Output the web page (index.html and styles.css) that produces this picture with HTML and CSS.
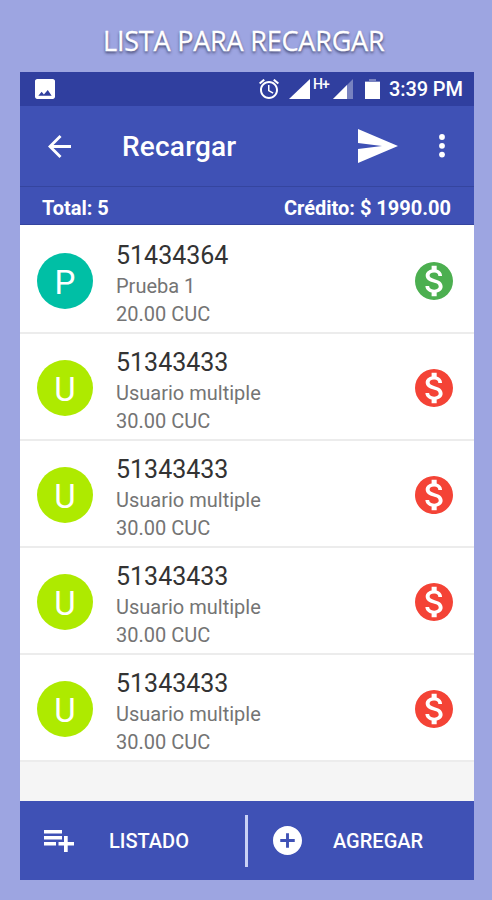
FILE: index.html
```html
<!DOCTYPE html>
<html lang="es">
<head>
  <meta charset="UTF-8">
  <meta name="viewport" content="width=device-width, initial-scale=1.0">
  <title>Lista para recargar</title>
  <link rel="stylesheet" href="styles.css">
</head>
<body>
  <svg width="0" height="0" class="defs">
    <symbol id="coin" viewBox="2 2 20 20">
      <path d="M12 2C6.48 2 2 6.48 2 12s4.48 10 10 10 10-4.48 10-10S17.52 2 12 2zm1.41 16.09V20h-2.67v-1.93c-1.71-.36-3.16-1.46-3.27-3.4h1.96c.1 1.05.82 1.87 2.65 1.87 1.96 0 2.4-.98 2.4-1.59 0-.83-.44-1.61-2.67-2.14-2.48-.6-4.18-1.62-4.18-3.67 0-1.72 1.39-2.84 3.11-3.21V4h2.67v1.95c1.86.45 2.79 1.86 2.85 3.39H14.3c-.05-1.11-.64-1.87-2.22-1.87-1.5 0-2.4.68-2.4 1.64 0 .84.65 1.39 2.67 1.91s4.18 1.39 4.18 3.91c-.01 1.83-1.38 2.83-3.12 3.16z"/>
    </symbol>
  </svg>

  <h1>LISTA PARA RECARGAR</h1>

  <div class="phone">
    <div class="status">
      <svg class="photo" width="20" height="20" viewBox="3 3 18 18"><path d="M21 19V5c0-1.100-.9-2-2-2H5c-1.100 0-2 .9-2 2v14c0 1.100.9 2 2 2h14c1.100 0 2-.9 2-2zM9 14.500l2 2.500L14.500 13l3.500 5H6l3-3.500z"/></svg>
      <svg class="alarm" width="20" height="20" viewBox="2 2 20 20"><path d="M22 5.720l-4.600-3.860-1.290 1.530 4.600 3.860L22 5.720zM7.880 3.390L6.600 1.860 2 5.710l1.290 1.530 4.590-3.850zM12.500 8H11v6l4.750 2.850.75-1.230-4-2.370V8zM12 4c-4.970 0-9 4.030-9 9s4.020 9 9 9c4.970 0 9-4.030 9-9s-4.030-9-9-9zm0 16c-3.870 0-7-3.130-7-7s3.130-7 7-7 7 3.130 7 7-3.130 7-7 7z"/></svg>
      <svg class="signal" width="21" height="20" viewBox="0 0 21 20"><path d="M0 20L21 0v20z"/></svg>
      <span class="network">H+</span>
      <svg class="signal2" width="20" height="20" viewBox="0 0 20 20"><path opacity=".35" d="M0 20L20 0v20z"/><path d="M0 20L14 6v14z"/></svg>
      <svg class="battery" width="15" height="20" viewBox="0 0 15 20"><path opacity=".35" d="M0 2h4V0h7v2h4v3H0z"/><path d="M0 3h15v17H0z"/></svg>
      <span class="clock">3:39 PM</span>
    </div>

    <div class="toolbar">
      <svg class="back" width="23" height="23" viewBox="4 4 16 16"><path d="M20 11H7.830l5.590-5.590L12 4l-8 8 8 8 1.410-1.410L7.830 13H20v-2z"/></svg>
      <h2>Recargar</h2>
      <svg class="send" width="40" height="34" viewBox="0 0 40 34"><path d="M0 0L40 17 0 34V20l24-3-24-3z"/></svg>
      <svg class="more" width="6" height="24" viewBox="0 0 6 24"><circle cx="3" cy="3" r="2.900"/><circle cx="3" cy="11.800" r="2.900"/><circle cx="3" cy="20.600" r="2.900"/></svg>
    </div>

    <div class="summary">
      <span class="total">Total: 5</span>
      <span class="credit">Crédito: $ 1990.00</span>
    </div>

    <ul class="list">
      <li class="row">
        <div class="avatar teal">P</div>
        <div class="info">
          <p class="number">51434364</p>
          <p class="name">Prueba 1</p>
          <p class="amount">20.00 CUC</p>
        </div>
        <svg class="coin green"><use href="#coin"/></svg>
      </li>
      <li class="row">
        <div class="avatar">U</div>
        <div class="info">
          <p class="number">51343433</p>
          <p class="name">Usuario multiple</p>
          <p class="amount">30.00 CUC</p>
        </div>
        <svg class="coin"><use href="#coin"/></svg>
      </li>
      <li class="row">
        <div class="avatar">U</div>
        <div class="info">
          <p class="number">51343433</p>
          <p class="name">Usuario multiple</p>
          <p class="amount">30.00 CUC</p>
        </div>
        <svg class="coin"><use href="#coin"/></svg>
      </li>
      <li class="row">
        <div class="avatar">U</div>
        <div class="info">
          <p class="number">51343433</p>
          <p class="name">Usuario multiple</p>
          <p class="amount">30.00 CUC</p>
        </div>
        <svg class="coin"><use href="#coin"/></svg>
      </li>
      <li class="row">
        <div class="avatar">U</div>
        <div class="info">
          <p class="number">51343433</p>
          <p class="name">Usuario multiple</p>
          <p class="amount">30.00 CUC</p>
        </div>
        <svg class="coin"><use href="#coin"/></svg>
      </li>
    </ul>

    <div class="actions">
      <div class="action">
        <svg class="icon-list" width="30" height="22" viewBox="0 0 30 22"><path d="M0 0h18v3.500H0zM0 6h18v3.500H0zM0 12h12v3.500H0zM20 6h3.700v6H30v3.500h-6.300V22H20v-6.500h-5.500V12H20z"/></svg>
        <span>LISTADO</span>
      </div>
      <div class="divider"></div>
      <div class="action">
        <svg class="icon-add" width="29" height="29" viewBox="2 2 20 20"><path d="M12 2C6.480 2 2 6.480 2 12s4.480 10 10 10 10-4.480 10-10S17.520 2 12 2zm5 11h-4v4h-2v-4H7v-2h4V7h2v4h4v2z"/></svg>
        <span>AGREGAR</span>
      </div>
    </div>
  </div>
</body>
</html>
```

FILE: styles.css
```css
:root {
  --bg: #9da5e1;
  --primary: #3f51b5;
  --primary-dark: #303f9f;
  --text: #333333;
  --muted: #747474;
}
*, *::before, *::after { box-sizing: border-box; margin: 0; padding: 0; }
body {
  font-family: Roboto, sans-serif;
  background: var(--bg);
  height: 900px;
  overflow: hidden;
}
svg {
  display: block;
  flex: none;
  fill: #fff;
}
span, p, h1, h2 { white-space: nowrap; }
.defs { position: absolute; }
h1 {
  height: 72px;
  padding-top: 22px;
  padding-left: 103px;
  font-family: "Open Sans", sans-serif;
  font-size: 27px;
  font-weight: 500;
  line-height: 38px;
  letter-spacing: -0.2px;
  color: #fff;
  -webkit-text-stroke: 0.3px #fff;
  text-shadow: 0 2px 3px rgba(30, 30, 60, .75);
}
.phone {
  width: 454px;
  height: 808px;
  margin-left: 20px;
  background: #f5f5f5;
  display: flex;
  flex-direction: column;
}
.status {
  height: 34px;
  background: var(--primary-dark);
  display: flex;
  align-items: center;
  padding-left: 15px;
  color: #fff;
}
.alarm { margin-left: 204px; }
.signal { margin-left: 10px; }
.network {
  width: 16px;
  margin-left: 3px;
  margin-top: -10px;
  font-size: 14px;
  font-weight: 500;
  letter-spacing: -1px;
}
.signal2 { margin-left: 4px; }
.battery { margin-left: 12px; }
.clock {
  margin-left: 9px;
  font-size: 20px;
  font-weight: 500;
  letter-spacing: -0.1px;
}
.toolbar {
  height: 80px;
  background: var(--primary);
  display: flex;
  align-items: center;
  padding-left: 28px;
}
h2 {
  width: 236px;
  margin-left: 51px;
  font-size: 28px;
  font-weight: 500;
  letter-spacing: 0.2px;
  color: #fff;
}
.more { margin-left: 41px; }
.summary {
  height: 39px;
  background: var(--primary);
  border-top: 1px solid #35459f;
  border-bottom: 1px solid #35459f;
  display: flex;
  align-items: center;
  justify-content: space-between;
  padding: 4px 23px 0 22px;
  font-size: 20px;
  font-weight: 700;
  color: #fff;
}
.list {
  list-style: none;
  padding-top: 2px;
  background: #fff;
}
.row {
  height: 107px;
  border-bottom: 2px solid #ececec;
  display: flex;
  align-items: center;
  padding: 2px 21px 0 17px;
}
.avatar {
  width: 56px;
  height: 56px;
  border-radius: 50%;
  background: #aeea00;
  color: #fff;
  font-size: 33px;
  line-height: 59px;
  text-align: center;
}
.teal { background: #00bfa5; }
.info {
  flex: 1;
  margin-top: 6px;
  margin-left: 23px;
  color: var(--muted);
  font-size: 20px;
  line-height: 27.5px;
}
.number {
  font-size: 25px;
  line-height: 34px;
  color: var(--text);
}
.coin {
  width: 38px;
  height: 38px;
  fill: #f44336;
}
.green { fill: #4caf50; }
.actions {
  height: 79px;
  margin-top: auto;
  background: var(--primary);
  display: flex;
  align-items: center;
  font-size: 20px;
  font-weight: 500;
  color: #fff;
}
.action {
  width: 225px;
  display: flex;
  align-items: center;
}
.icon-list {
  margin-left: 24px;
  margin-right: 35px;
}
.divider {
  width: 3px;
  height: 52px;
  background: #c9d1f5;
}
.icon-add {
  margin-left: 25px;
  margin-right: 31px;
}
```
